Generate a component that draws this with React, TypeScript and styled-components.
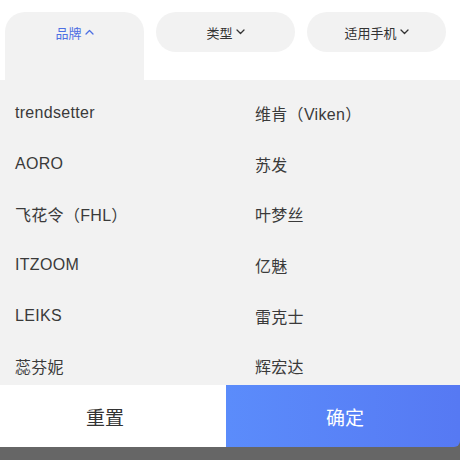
import React from "react";
import styled, { createGlobalStyle } from "styled-components";

const Global = createGlobalStyle`
  html, body { margin: 0; padding: 0; background: #ffffff; }
  body { font-family: "Liberation Sans", "Noto Sans CJK SC", sans-serif; }
`;

const Page = styled.div`
  width: 460px;
  height: 460px;
  display: flex;
  flex-direction: column;
  overflow: hidden;
  background: #666666;
`;

const TabBar = styled.div`
  display: flex;
  gap: 12px;
  padding: 12px 0 0 5px;
  height: 80px;
  flex-shrink: 0;
  box-sizing: border-box;
  background: #ffffff;
  align-items: flex-start;
`;

const Tab = styled.div<{ $active?: boolean }>`
  width: 139px;
  height: ${(p) => (p.$active ? "68px" : "40px")};
  background: #f2f2f2;
  border-radius: ${(p) => (p.$active ? "20px 20px 0 0" : "20px")};
  display: flex;
  justify-content: center;
  align-items: flex-start;
  box-sizing: border-box;
`;

const TabLabel = styled.span<{ $active?: boolean }>`
  display: flex;
  align-items: center;
  gap: 3px;
  height: 40px;
  font-size: 13px;
  color: ${(p) => (p.$active ? "#4d6fe3" : "#333333")};
`;

const Panel = styled.div`
  height: 305px;
  flex-shrink: 0;
  background: #f2f2f2;
  overflow: hidden;
  padding: 8px 0 0 15px;
  box-sizing: border-box;
  display: grid;
  grid-template-columns: 240px 1fr;
  grid-auto-rows: 50.6px;
`;

const Item = styled.div`
  display: flex;
  align-items: center;
  font-size: 16px;
  letter-spacing: 0.3px;
  color: #3a3a3a;
`;

const Footer = styled.div`
  display: flex;
  height: 62px;
  flex-shrink: 0;
`;

const FooterButton = styled.div<{ $primary?: boolean }>`
  flex: ${(p) => (p.$primary ? "0 0 234px" : "1")};
  display: flex;
  align-items: center;
  justify-content: center;
  box-sizing: border-box;
  padding-right: ${(p) => (p.$primary ? "0" : "16px")};
  padding-left: ${(p) => (p.$primary ? "4px" : "0")};
  font-size: 19px;
  color: ${(p) => (p.$primary ? "#ffffff" : "#333333")};
  background: ${(p) =>
    p.$primary ? "linear-gradient(90deg, #5b8cfb 0%, #5679f3 100%)" : "#ffffff"};
  border-bottom-right-radius: ${(p) => (p.$primary ? "6px" : "0")};
`;

const Chevron = ({ up, color }: { up?: boolean; color: string }) => (
  <svg width="9" height="6" viewBox="0 0 9 6">
    <polyline
      points={up ? "1,5 4.5,1.5 8,5" : "1,1 4.5,4.5 8,1"}
      fill="none"
      stroke={color}
      strokeWidth="1.3"
      strokeLinecap="round"
      strokeLinejoin="round"
    />
  </svg>
);

const items = [
  "trendsetter",
  "维肯（Viken）",
  "AORO",
  "苏发",
  "飞花令（FHL）",
  "叶梦丝",
  "ITZOOM",
  "亿魅",
  "LEIKS",
  "雷克士",
  "蕊芬妮",
  "辉宏达",
];

export default function App() {
  return (
    <Page>
      <Global />
      <TabBar>
        <Tab $active>
          <TabLabel $active>
            品牌
            <Chevron up color="#4d6fe3" />
          </TabLabel>
        </Tab>
        <Tab>
          <TabLabel>
            类型
            <Chevron color="#333333" />
          </TabLabel>
        </Tab>
        <Tab>
          <TabLabel>
            适用手机
            <Chevron color="#333333" />
          </TabLabel>
        </Tab>
      </TabBar>
      <Panel>
        {items.map((t) => (
          <Item key={t}>{t}</Item>
        ))}
      </Panel>
      <Footer>
        <FooterButton>重置</FooterButton>
        <FooterButton $primary>确定</FooterButton>
      </Footer>
    </Page>
  );
}
